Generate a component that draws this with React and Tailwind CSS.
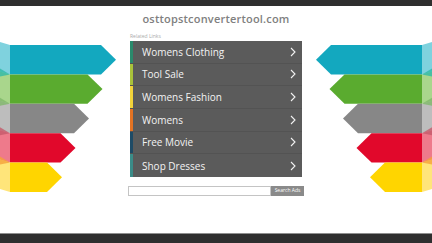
const links = [
  { label: "Womens Clothing", color: "#2a8a6c" },
  { label: "Tool Sale", color: "#a9c23a" },
  { label: "Womens Fashion", color: "#f2d33a" },
  { label: "Womens", color: "#e37323" },
  { label: "Free Movie", color: "#1e4b66" },
  { label: "Shop Dresses", color: "#3a8c88" },
];

const bands = [
  { main: "#13a8bf", light: "#7fd2de", dark: "#2fb9a8" },
  { main: "#5aab2f", light: "#a9d68c", dark: "#7fb86a" },
  { main: "#878787", light: "#bdbdbd", dark: "#c45a6a" },
  { main: "#e1082b", light: "#ee7a8b", dark: "#f5a13a" },
  { main: "#ffd500", light: "#ffe57a", dark: "#ffd500" },
];

function Arrows() {
  const top = 13;
  const h = 29.4;
  return (
    <svg width="128" height="170" viewBox="0 0 128 170">
      {bands.map((b, i) => {
        const y0 = top + i * h;
        const y1 = y0 + h;
        const tip = 116 - i * 13.5;
        const end = tip - 15;
        return (
          <g key={i}>
            <polygon points={`0,${y0 - 3} 10,${y0} 10,${y1} 0,${y1 - 3}`} fill={b.light} />
            <polygon points={`10,${y0} ${end},${y0} ${tip},${(y0 + y1) / 2} ${end},${y1} 10,${y1}`} fill={b.main} />
          </g>
        );
      })}
      {bands.slice(0, 4).map((b, i) => {
        const y = top + (i + 1) * h;
        return <polygon key={i} points={`0,${y - 6} 10,${y} 0,${y + 2}`} fill={b.dark} opacity="0.8" />;
      })}
    </svg>
  );
}

function Chevron() {
  return (
    <svg width="6" height="10" viewBox="0 0 6 10">
      <polyline points="1,1 5,5 1,9" fill="none" stroke="#f2f2f2" strokeWidth="1.1" />
    </svg>
  );
}

export default function App() {
  return (
    <div className="h-[243px] w-[432px] flex flex-col bg-white overflow-hidden" style={{ fontFamily: '"Open Sans", "Liberation Sans", sans-serif' }}>
      <div className="h-[6px] bg-[#2f2f2f]" />
      <div className="h-[26px] flex items-center justify-center text-[11px] font-semibold text-[#808080] tracking-[0.2px]">
        osttopstconvertertool.com
      </div>
      <div className="flex items-start">
        <Arrows />
        <div className="w-[176px] flex flex-col">
          <div className="h-[9px] pl-[2px] flex items-center text-[5px] text-[#aaa]">Related Links</div>
          <div className="mx-[2px] bg-[#5b5b5b]">
            {links.map((l) => (
              <div key={l.label} className="h-[22.67px] flex items-center border-b border-[#535353] last:border-b-0">
                <div className="w-[3px] h-full" style={{ background: l.color }} />
                <span className="ml-[9px] flex-1 pt-[1px] text-[10px] text-[#f3f3f3]">{l.label}</span>
                <span className="mr-[6px] flex items-center"><Chevron /></span>
              </div>
            ))}
          </div>
          <div className="mt-[9px] flex h-[10px]">
            <div className="flex-1 border border-[#c4c4c4] bg-white" />
            <div className="w-[33px] bg-[#8a8a8a] text-white text-[5px] flex items-center justify-center">Search Ads</div>
          </div>
        </div>
        <div className="-scale-x-100">
          <Arrows />
        </div>
      </div>
      <div className="flex-1" />
      <div className="h-[10px] bg-[#2f2f2f] border-t border-[#8f8f8f]" />
    </div>
  );
}
